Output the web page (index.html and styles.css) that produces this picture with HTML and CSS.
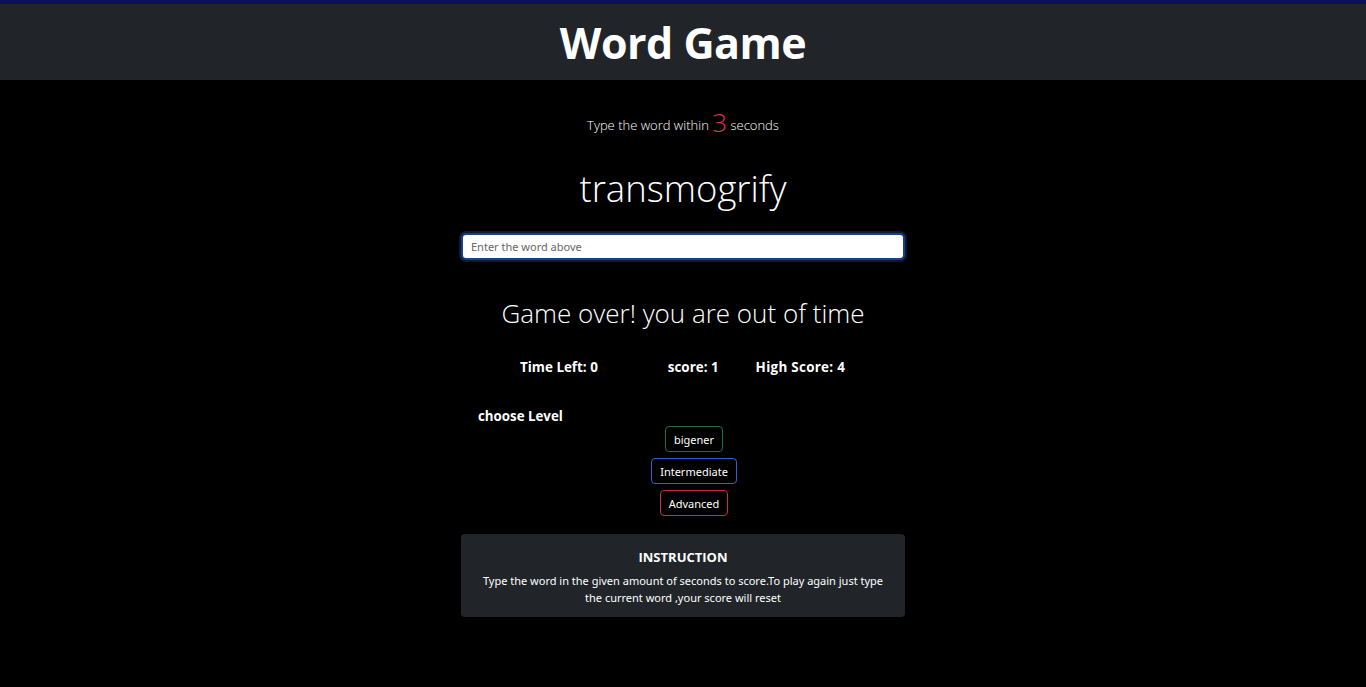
FILE: index.html
```html
<!DOCTYPE html>
<html lang="en">
<head>
<meta charset="utf-8">
<title>Word Game</title>
<link rel="stylesheet" href="styles.css">
</head>
<body>
<div class="topline"></div>
<header class="header"><h1>Word Game</h1></header>
<main class="main">
  <p class="lead">Type the word within <span class="secs">3</span> seconds</p>
  <h2 class="word">transmogrify</h2>
  <input class="entry" type="text" placeholder="Enter the word above" autofocus>
  <h3 class="message">Game over! you are out of time</h3>
  <div class="stats">
    <span class="stat stat-time">Time Left: 0</span>
    <span class="stat stat-score">score: 1</span>
    <span class="stat stat-high">High Score: 4</span>
  </div>
  <div class="levels">
    <p class="choose">choose Level</p>
    <div class="level-buttons">
      <button class="btn btn-green">bigener</button>
      <button class="btn btn-blue">Intermediate</button>
      <button class="btn btn-red">Advanced</button>
    </div>
  </div>
  <section class="instruction">
    <h4>INSTRUCTION</h4>
    <p>Type the word in the given amount of seconds to score.To play again just type the current word ,your score will reset</p>
  </section>
</main>
</body>
</html>
```
FILE: styles.css
```css
* { box-sizing: border-box; }
html, body { margin: 0; padding: 0; background: #000; }
body {
  font-family: "Open Sans", "Noto Sans", sans-serif;
  color: #fff;
  min-height: 687px;
}
.topline { height: 4px; background: #0b0f5c; }
.header {
  background: #212529;
  height: 76px;
  display: flex;
  align-items: center;
  justify-content: center;
}
.header h1 {
  margin: 0;
  font-size: 43px;
  font-weight: 700;
  letter-spacing: -0.5px;
  line-height: 1;
}
.main {
  width: 444px;
  margin: 0 auto;
  display: flex;
  flex-direction: column;
  align-items: stretch;
}
.lead {
  margin: 29px 0 0;
  text-align: center;
  font-size: 13px;
  font-weight: 300;
  line-height: 24px;
}
.secs {
  color: #dc3545;
  font-size: 26px;
  vertical-align: -2px;
  line-height: 1;
}
.word {
  margin: 28px 0 0;
  text-align: center;
  font-size: 36.5px;
  font-weight: 300;
  line-height: 46px;
}
.entry {
  margin-top: 22px;
  height: 27px;
  border: 2px solid #1b3f86;
  border-radius: 5px;
  box-shadow: 0 0 0 2px #0e1a33;
  background: #fff;
  padding: 0 8px;
  font-family: "Noto Sans", sans-serif;
  font-size: 11px;
  color: #222;
  outline: none;
}
.entry::placeholder { color: #666; }
.message {
  margin: 35px 0 0;
  text-align: center;
  font-size: 26px;
  font-weight: 300;
  line-height: 36px;
}
.stats {
  margin-top: 26px;
  display: flex;
  padding-left: 59px;
  font-size: 13.4px;
  font-weight: 700;
  line-height: 20px;
}
.stat-score { margin-left: 70px; }
.stat-high { margin-left: 37px; letter-spacing: 0.3px; }
.levels { margin-top: 29px; }
.choose {
  margin: 0 0 0 17px;
  font-size: 13.3px;
  font-weight: 700;
  line-height: 20px;
}
.level-buttons {
  display: flex;
  flex-direction: column;
  align-items: center;
  gap: 6px;
  margin-left: 22px;
}
.btn {
  background: transparent;
  color: #fff;
  font-family: "Noto Sans", sans-serif;
  font-size: 11px;
  height: 26px;
  padding: 0 8px;
  border-radius: 4px;
  border: 1px solid;
  cursor: pointer;
}
.btn-green { border-color: #1f6e46; }
.btn-blue { border-color: #2f62d6; }
.btn-red { border-color: #c8313f; }
.instruction {
  margin-top: 18px;
  background: #212529;
  border-radius: 4px;
  padding: 14px 20px 11px;
  text-align: center;
}
.instruction h4 {
  margin: 0;
  font-size: 13px;
  font-weight: 700;
  line-height: 18px;
}
.instruction p {
  margin: 6px 0 0;
  font-family: "Noto Sans", sans-serif;
  font-size: 11px;
  line-height: 17px;
}
```
